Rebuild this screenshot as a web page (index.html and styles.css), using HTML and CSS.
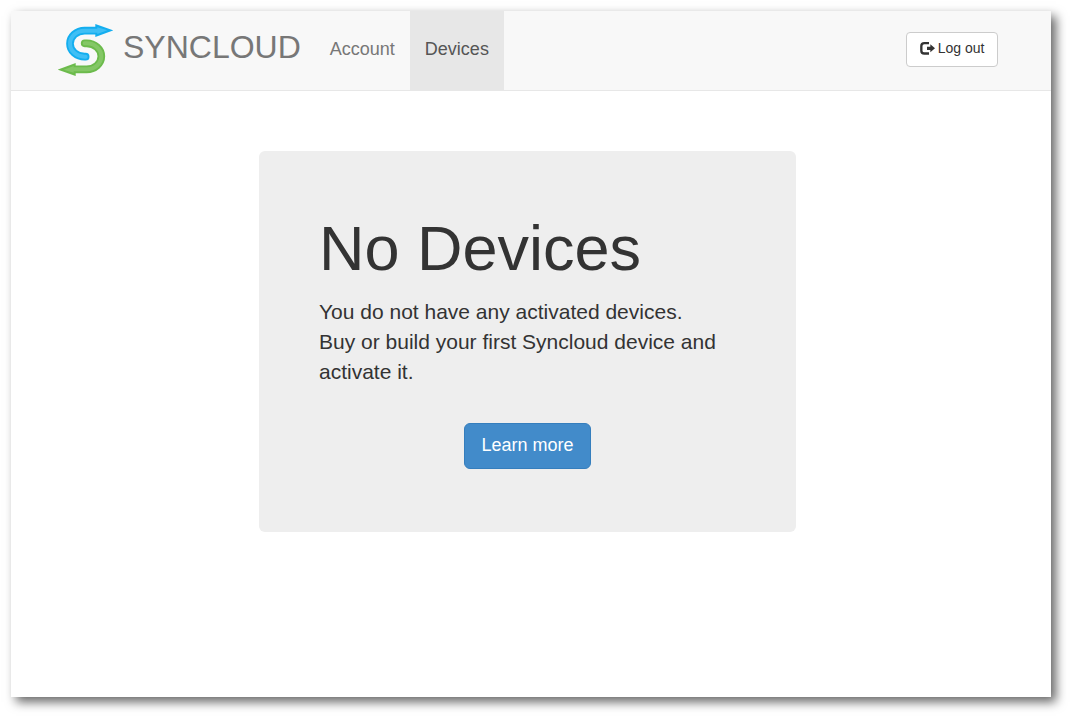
FILE: index.html
```html
<!DOCTYPE html>
<html lang="en">
<head>
<meta charset="utf-8">
<meta name="viewport" content="width=device-width, initial-scale=1">
<title>Syncloud</title>
<link rel="stylesheet" href="styles.css">
</head>
<body>
<div class="window">
  <header class="navbar">
    <a class="brand" href="#">
      <svg class="brand-logo" viewBox="24 24 165 162" aria-hidden="true">
        <path d="M136 27 190 46 136 66Z" fill="#14aeef"/>
        <path d="M107 125H104A44 39 0 0 1 104 47H142" fill="none" stroke="#14aeef" stroke-width="23" stroke-linecap="round"/>
        <path d="M107 125H104A44 39 0 0 1 104 47H142" fill="none" stroke="#3fbff5" stroke-width="12" stroke-linecap="round"/>
        <path d="M142 37 172 46 142 57Z" fill="#3fbff5"/>
        <path d="M77 144 23 164 77 183Z" fill="#6cbb4c"/>
        <path d="M104 85H110A44 39 0 0 1 110 163H71" fill="none" stroke="#6cbb4c" stroke-width="23" stroke-linecap="round"/>
        <path d="M104 85H110A44 39 0 0 1 110 163H71" fill="none" stroke="#84c766" stroke-width="12" stroke-linecap="round"/>
        <path d="M71 153 41 164 71 173Z" fill="#84c766"/>
      </svg>
      <span class="brand-name">SYNCLOUD</span>
    </a>
    <nav class="nav">
      <a class="nav-link" href="#">Account</a>
      <a class="nav-link nav-link-active" href="#" aria-current="page">Devices</a>
    </nav>
    <button class="btn btn-default" type="button">
      <svg class="btn-icon" viewBox="0 0 45 39" aria-hidden="true">
        <path d="M27 3.500H13Q4 3.500 4 12V26Q4 34.500 13 34.500H27" fill="none" stroke="#333" stroke-width="7"/>
        <path d="M21 14H31V7L45 19 31 31V24H21Z" fill="#333"/>
      </svg>
      Log out
    </button>
  </header>
  <main class="content">
    <section class="jumbotron">
      <h1 class="jumbotron-title">No Devices</h1>
      <p class="jumbotron-text">You do not have any activated devices.<br>Buy or build your first Syncloud device and activate it.</p>
      <a class="btn btn-primary" href="#">Learn more</a>
    </section>
  </main>
</div>
</body>
</html>
```

FILE: styles.css
```css
* {
  box-sizing: border-box;
}

body {
  margin: 0;
  min-height: 100vh;
  padding: 11px 19px 19px 11px;
  display: flex;
  background: #fff;
  color: #333;
  font-family: "Liberation Sans", Arial, sans-serif;
  font-size: 14px;
  line-height: 20px;
}

a {
  text-decoration: none;
}

.window {
  flex: 1;
  display: flex;
  flex-direction: column;
  background: #fff;
  box-shadow: 5px 5px 10px rgba(0, 0, 0, 0.6);
}

.navbar {
  display: flex;
  align-items: center;
  min-height: 80px;
  padding: 0 53px 2px 47px;
  background: #f8f8f8;
  border-bottom: 1px solid #e7e7e7;
}

.brand {
  display: flex;
  align-items: center;
  gap: 10px;
  margin-right: 14px;
  color: #777;
}

.brand-logo {
  width: 55px;
  height: 54px;
}

.brand-name {
  padding-bottom: 6px;
  font-size: 32px;
  line-height: 36px;
}

.nav {
  display: flex;
  align-self: stretch;
  flex: 1;
  margin-bottom: -2px;
}

.nav-link {
  display: flex;
  align-items: center;
  padding: 0 15px 4px;
  color: #777;
  font-size: 18px;
}

.nav-link-active {
  background: #e7e7e7;
  color: #555;
}

.btn {
  display: inline-flex;
  align-items: center;
  justify-content: center;
  border: 1px solid transparent;
  font-family: inherit;
  cursor: pointer;
}

.btn-default {
  gap: 3px;
  min-width: 92px;
  padding: 5px 12px 8px;
  background: #fff;
  border-color: #ccc;
  border-radius: 4px;
  color: #333;
  font-size: 14px;
  line-height: 20px;
}

.btn-icon {
  width: 15px;
  height: 13px;
}

.btn-primary {
  align-self: center;
  padding: 9px 16px 11px;
  background: #428bca;
  border-color: #357ebd;
  border-radius: 6px;
  color: #fff;
  font-size: 18px;
  line-height: 24px;
}

.content {
  display: flex;
  justify-content: center;
  padding: 60px 22px 60px 15px;
}

.jumbotron {
  display: flex;
  flex-direction: column;
  width: 100%;
  max-width: 537px;
  padding: 62px 60px 63px;
  background: #eee;
  border-radius: 6px;
}

.jumbotron-title {
  margin: 0 0 14px;
  font-size: 63px;
  font-weight: 500;
  line-height: 70px;
}

.jumbotron-text {
  margin: 0 0 36px;
  font-size: 21px;
  line-height: 30px;
}
```
